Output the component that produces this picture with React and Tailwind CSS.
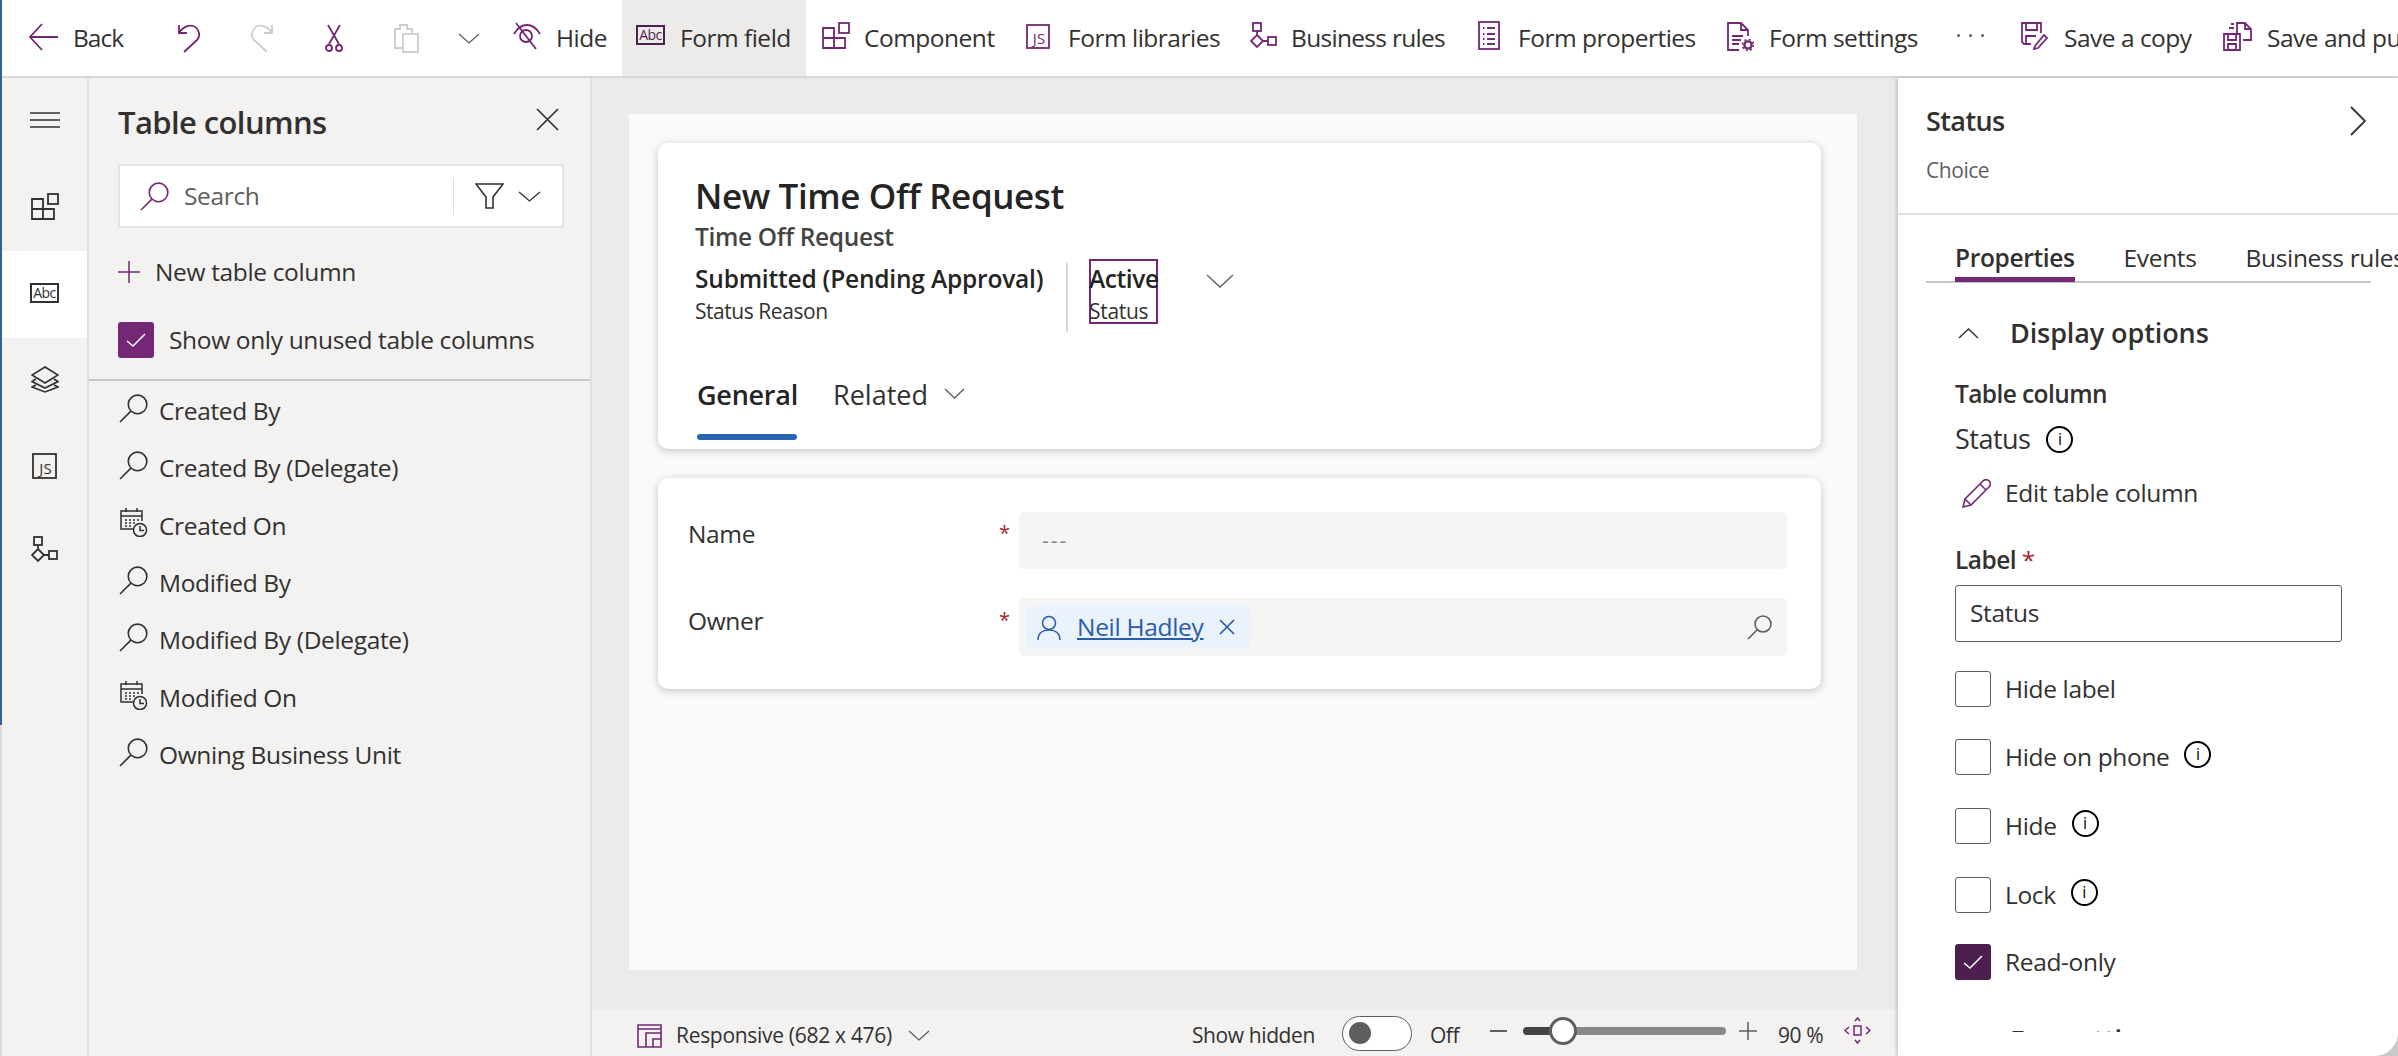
import React from "react";

const P = "#742774";
const G = "#323130";

function Svg({ w, h, children, className = "", color = P, sw = 1.8 }) {
  return (
    <svg width={w} height={h} viewBox={`0 0 ${w} ${h}`} fill="none" stroke={color} strokeWidth={sw} className={`shrink-0 ${className}`}>
      {children}
    </svg>
  );
}

function Chevron({ w = 22, h = 11, color = "#605e5c", className = "" }) {
  return (
    <Svg w={w} h={h} color={color} sw={1.3} className={className}>
      <path d={`M1 1 L${w / 2} ${h - 1} L${w - 1} 1`} />
    </Svg>
  );
}

function AbcIcon({ color }) {
  return (
    <Svg w={29} h={20} color={color} sw={2}>
      <rect x="1" y="1" width="27" height="18" />
      <text x="14.5" y="15" textAnchor="middle" fontSize="14" letterSpacing="-0.5" fill={color} stroke="none" fontFamily="'Open Sans', sans-serif">Abc</text>
    </Svg>
  );
}

function JsIcon({ color, w = 24, h = 25 }) {
  return (
    <Svg w={w} h={h} color={color}>
      <rect x="1" y="1" width={w - 2} height={h - 2} />
      <text x={w / 2 + 1} y={h - 5} textAnchor="middle" fontSize="15" fill={color} stroke="none" fontFamily="'Open Sans', sans-serif">JS</text>
    </Svg>
  );
}

function ComponentIcon({ color }) {
  return (
    <Svg w={28} h={27} color={color}>
      <path d="M1 6 H12 V26 H1 Z M12 16 H23 V26 H12 M1 16 H12" />
      <rect x="17" y="1" width="10" height="10" />
    </Svg>
  );
}

function RulesIcon({ color }) {
  return (
    <Svg w={27} h={27} color={color}>
      <rect x="3" y="1" width="8" height="8" />
      <path d="M7 9 V13 M7 13 L13 19 L7 25 L1 19 Z M13 19 H18" />
      <rect x="18" y="15" width="8" height="8" />
    </Svg>
  );
}

function SearchIcon({ w = 29, h = 29, color = G, sw = 1.6 }) {
  return (
    <Svg w={w} h={h} color={color} sw={sw}>
      <circle cx={w * 0.64} cy={h * 0.36} r={w * 0.32} />
      <path d={`M${w * 0.41} ${h * 0.59} L1 ${h - 1}`} />
    </Svg>
  );
}

function CalendarIcon() {
  return (
    <Svg w={29} h={29} color={G} sw={1.5}>
      <path d="M15 21 H2 V3 H23 V13 M2 8 H23 M7 0 V4 M18 0 V4" />
      <path d="M6 12 h2 M10 12 h2 M14 12 h2 M18 12 h2 M6 15 h2 M10 15 h2 M14 15 h2 M6 18 h2 M10 18 h2" />
      <circle cx="21" cy="22" r="6.5" />
      <path d="M21 18 V22.5 H25" />
    </Svg>
  );
}

function InfoIcon({ className = "" }) {
  return (
    <span className={`flex h-[27px] w-[27px] shrink-0 items-center justify-center rounded-full border-2 border-black text-[16px] leading-none text-black ${className}`}>i</span>
  );
}

function Check({ color = "#fff" }) {
  return (
    <Svg w={22} h={16} color={color} sw={1.5}>
      <path d="M2 9 L8 14 L20 2" />
    </Svg>
  );
}

function ToolText({ children, className = "", track = "tracking-[-0.5px]" }) {
  return <span className={`shrink-0 whitespace-nowrap text-[24.5px] ${track} text-[#323130] ${className}`}>{children}</span>;
}

function Toolbar() {
  return (
    <div className="flex h-[78px] shrink-0 items-center overflow-hidden border-b-2 border-[#d6d6d6] bg-white pl-[27px]">
      <Svg w={30} h={28} className="mt-[-2px]"><path d="M13 1 L1 14 L13 27 M1 14 H29" /></Svg>
      <ToolText track="tracking-[-1px]" className="ml-[14px] w-[59px]">Back</ToolText>
      <div className="ml-[15px] h-[49px] w-[2px] bg-[#d4d4d4]" />
      <Svg w={23} h={29} className="ml-[30px]"><path d="M2 1 V9 H10 M2 9 C5 3 12 1 16 2 C22 4 24 12 20 16 L7 28" /></Svg>
      <Svg w={23} h={29} color="#cfcdcb" className="ml-[51px]"><path d="M21 1 V9 H13 M21 9 C18 3 11 1 7 2 C1 4 -1 12 3 16 L16 28" /></Svg>
      <Svg w={18} h={28} className="ml-[51px]">
        <path d="M3 1 L14 20 M15 1 L4 20" />
        <circle cx="4" cy="24" r="3" />
        <circle cx="14" cy="24" r="3" />
      </Svg>
      <Svg w={25} h={29} color="#cfcdcb" className="ml-[51px]">
        <path d="M9 24 H1 V5 H6 V1 H13 V5 H18 V9" />
        <rect x="9" y="10" width="15" height="18" />
      </Svg>
      <div className="ml-[22px] h-[49px] w-[2px] bg-[#bdbdbd]" />
      <Chevron className="ml-[17px]" />
      <Svg w={30} h={28} className="ml-[31px] mt-[-4px]">
        <path d="M3 12 C7 5 11 3 16 3 C22 3 26 7 29 12 M5 1 L25 27" />
        <circle cx="15" cy="14" r="6" />
      </Svg>
      <ToolText className="ml-[15px] w-[51px]">Hide</ToolText>
      <div className="ml-[15px] flex h-full w-[184px] shrink-0 items-center bg-[#edebe9] pl-[14px]">
        <div className="mt-[-7px]"><AbcIcon color="#4d1f4f" /></div>
        <ToolText className="ml-[15px]">Form field</ToolText>
      </div>
      <div className="ml-[16px] mt-[-6px]"><ComponentIcon color={P} /></div>
      <ToolText className="ml-[14px] w-[131px]">Component</ToolText>
      <div className="ml-[31px] mt-[-3px]"><JsIcon color={P} /></div>
      <ToolText className="ml-[18px] w-[151px]">Form libraries</ToolText>
      <div className="ml-[31px] mt-[-6px]"><RulesIcon color={P} /></div>
      <ToolText track="tracking-[-0.7px]" className="ml-[14px] w-[154px]">Business rules</ToolText>
      <Svg w={22} h={29} className="ml-[33px] mt-[-5px]">
        <rect x="1" y="1" width="20" height="27" />
        <path d="M5 7 h1.5 M9 7 h8 M5 13 h1.5 M9 13 h8 M5 18 h1.5 M9 18 h8 M5 23 h1.5 M9 23 h8" />
      </Svg>
      <ToolText className="ml-[18px] w-[178px]">Form properties</ToolText>
      <Svg w={27} h={29} className="ml-[31px] mt-[-4px]">
        <path d="M12 28 H1 V1 H14 L21 8 V14 M14 1 V8 H21 M5 14 H16 M5 18 H14 M5 22 H12" />
        <circle cx="21" cy="23" r="3.6" strokeWidth="2.4" />
        <circle cx="21" cy="23" r="5.6" strokeWidth="1.6" strokeDasharray="2 2.4" />
      </Svg>
      <ToolText className="ml-[15px] w-[151px]">Form settings</ToolText>
      <div className="ml-[37px] mt-[-6px] flex w-[27px] shrink-0 justify-between">
        <span className="h-[3px] w-[3px] rounded-full bg-[#605e5c]" />
        <span className="h-[3px] w-[3px] rounded-full bg-[#605e5c]" />
        <span className="h-[3px] w-[3px] rounded-full bg-[#605e5c]" />
      </div>
      <Svg w={27} h={28} className="ml-[37px] mt-[-4px]">
        <path d="M10 22 H3 L1 20 V1 H20 V11 M5 1 V8 H16 V1 M5 22 V14 H15" />
        <path d="M14 24 L23 13 L26 16 L17 26 L13 27 Z" />
      </Svg>
      <ToolText className="ml-[16px] w-[130px]">Save a copy</ToolText>
      <Svg w={29} h={29} className="ml-[29px] mt-[-4px]">
        <path d="M14 11 V1 H22 L28 7 V18 H20 M22 1 V7 H28 M8 2 H11 M6 6 H11" />
        <path d="M1 12 H17 V28 H1 Z M5 12 V18 H13 V12 M5 28 V22 H13 V28" />
      </Svg>
      <ToolText className="ml-[15px]">Save and publish</ToolText>
    </div>
  );
}

function RailItem({ children, active, className = "" }) {
  return (
    <div className={`flex h-[86.5px] items-center justify-center ${active ? "bg-white" : ""}`}>
      <div className={`mt-[-3px] flex ${className}`}>{children}</div>
    </div>
  );
}

function Rail() {
  return (
    <div className="w-[87px] shrink-0 border-r-2 border-[#e1dfdd] bg-[#f3f2f1]">
      <RailItem>
        <Svg w={30} h={18} color={G} sw={1.6}><path d="M0 2 H30 M0 9 H30 M0 16 H30" /></Svg>
      </RailItem>
      <RailItem><ComponentIcon color={G} /></RailItem>
      <RailItem active><AbcIcon color={G} /></RailItem>
      <RailItem>
        <Svg w={28} h={27} color={G} sw={1.6}>
          <path d="M14 1 L27 9 L14 17 L1 9 Z M5 13 L1 15.5 L14 22 L27 15.5 L23 13 M5 19 L1 21 L14 26 L27 21 L23 19" />
        </Svg>
      </RailItem>
      <RailItem><JsIcon color={G} w={25} h={26} /></RailItem>
      <RailItem className="mb-[6px]"><RulesIcon color={G} /></RailItem>
    </div>
  );
}

const columns = [
  ["Created By", "s"],
  ["Created By (Delegate)", "s"],
  ["Created On", "c"],
  ["Modified By", "s"],
  ["Modified By (Delegate)", "s"],
  ["Modified On", "c"],
  ["Owning Business Unit", "s"],
];

function ColumnsPanel() {
  return (
    <div className="w-[503px] shrink-0 border-r-2 border-[#e1dfdd] bg-[#f3f2f1]">
      <div className="mt-[14px] flex h-[60px] items-center justify-between pl-[29px] pr-[31px]">
        <h2 className="text-[31px] font-semibold tracking-[-0.6px] text-[#323130]">Table columns</h2>
        <Svg w={23} h={23} color={G} sw={1.7} className="mt-[-5px]"><path d="M1 1 L22 22 M22 1 L1 22" /></Svg>
      </div>
      <div className="ml-[29px] mt-[12px] flex h-[64px] w-[446px] items-center border-2 border-[#e6e4e2] bg-white pl-[20px]">
        <SearchIcon color={P} />
        <span className="ml-[15px] w-[269px] text-[24.5px] tracking-[-0.35px] text-[#605e5c]">Search</span>
        <div className="h-[37px] w-[1px] bg-[#e1dfdd]" />
        <Svg w={29} h={26} color={G} sw={1.6} className="ml-[21px]"><path d="M1 1 H28 L18 14 V25 H11 V14 Z" /></Svg>
        <Chevron w={23} h={11} className="ml-[14px]" color={G} />
      </div>
      <div className="ml-[29px] mt-[24px] flex h-[40px] items-center">
        <Svg w={22} h={22} sw={1.5}><path d="M11 0 V22 M0 11 H22" /></Svg>
        <span className="ml-[15px] text-[24.5px] tracking-[-0.35px] text-[#323130]">New table column</span>
      </div>
      <div className="ml-[29px] mt-[30px] flex h-[36px] items-center">
        <span className="flex h-[36px] w-[36px] items-center justify-center rounded-[3px] bg-[#742774]"><Check /></span>
        <span className="ml-[15px] text-[24.5px] tracking-[-0.35px] text-[#323130]">Show only unused table columns</span>
      </div>
      <div className="mt-[21px] h-[2px] bg-[#c8c6c4]" />
      <div className="mt-[1.5px]">
        {columns.map(([name, kind]) => (
          <div key={name} className="flex h-[57.4px] items-center pl-[30px]">
            <div className="mt-[-6px]">{kind === "s" ? <SearchIcon /> : <CalendarIcon />}</div>
            <span className="ml-[11px] text-[24.5px] tracking-[-0.35px] text-[#323130]">{name}</span>
          </div>
        ))}
      </div>
    </div>
  );
}

function FormPage() {
  return (
    <div className="ml-[37px] mr-[41px] mt-[36px] h-[856px] bg-[#fafafa] pl-[29px] pr-[36px] pt-[29px]">
      <div className="h-[306px] rounded-[10px] bg-white pl-[37px] pt-[33px] shadow-[0_2px_8px_rgba(0,0,0,0.22)]">
        <h1 className="text-[35px] font-semibold leading-[40px] tracking-[-0.4px] text-[#242424]">New Time Off Request</h1>
        <p className="mt-[3px] text-[24.5px] font-semibold leading-[36px] tracking-[-0.35px] text-[#444]">Time Off Request</p>
        <div className="mt-[4px] flex items-start">
          <div className="w-[371px] whitespace-nowrap">
            <p className="text-[24.5px] font-semibold leading-[40px] tracking-[-0.2px] text-[#242424]">Submitted (Pending Approval)</p>
            <p className="mt-[-1px] text-[21px] leading-[26px] tracking-[-0.45px] text-[#323130]">Status Reason</p>
          </div>
          <div className="mt-[4px] h-[69px] w-[2px] bg-[#d8d8d8]" />
          <div className="ml-[21px] h-[65px] w-[69px] border-2 border-[#742774]">
            <p className="ml-[-2px] mt-[-2px] text-[24.5px] font-semibold leading-[40px] tracking-[-0.4px] text-[#242424]">Active</p>
            <p className="ml-[-2px] mt-[-1px] text-[21px] leading-[26px] tracking-[-0.3px] text-[#323130]">Status</p>
          </div>
          <Chevron w={28} h={14} className="ml-[48px] mt-[15px]" />
        </div>
        <div className="mt-[43px] flex h-[40px] items-center">
          <span className="ml-[2px] w-[100px] text-[27px] font-semibold tracking-[-0.25px] text-[#242424]">General</span>
          <span className="ml-[36px] text-[27px] tracking-[0px] text-[#323130]">Related</span>
          <Chevron w={21} h={11} className="ml-[16px] mt-[-4px]" />
        </div>
        <div className="ml-[2px] mt-[19px] h-[6px] w-[100px] rounded-[3px] bg-[#2b66b5]" />
      </div>
      <div className="mt-[29px] h-[211px] rounded-[10px] bg-white pt-[34px] shadow-[0_2px_8px_rgba(0,0,0,0.22)]">
        <div className="flex">
          <div className="flex h-[44px] w-[361px] items-center justify-between pl-[30px] pr-[9px]">
            <span className="text-[24.5px] tracking-[-0.35px] text-[#323130]">Name</span>
            <span className="mt-[-2px] text-[20px] text-[#a4262c]">*</span>
          </div>
          <div className="flex h-[57px] w-[768px] items-center rounded-[5px] bg-[#f5f5f5] pl-[23px]">
            <span className="text-[21px] tracking-[2px] text-[#8a8886]">---</span>
          </div>
        </div>
        <div className="mt-[29px] flex">
          <div className="flex h-[46px] w-[361px] items-center justify-between pl-[30px] pr-[9px]">
            <span className="text-[24.5px] tracking-[-0.35px] text-[#323130]">Owner</span>
            <span className="mt-[-2px] text-[20px] text-[#a4262c]">*</span>
          </div>
          <div className="flex h-[58px] w-[768px] items-center justify-between rounded-[5px] bg-[#f5f5f5] pl-[7px] pr-[15px]">
            <div className="flex h-[43px] w-[225px] items-center rounded-[6px] bg-[#eaf2fb] pl-[11px]">
              <Svg w={24} h={25} color="#2b5ca8" sw={1.5}>
                <circle cx="12" cy="8" r="6.5" />
                <path d="M1 25 C1 18 6 15 12 15 C18 15 23 18 23 25" />
              </Svg>
              <span className="ml-[16px] text-[24.5px] tracking-[-0.3px] text-[#2b5ca8] underline">Neil Hadley</span>
              <Svg w={16} h={16} color="#2b5ca8" sw={1.7} className="ml-[15px]"><path d="M1 1 L15 15 M15 1 L1 15" /></Svg>
            </div>
            <SearchIcon w={25} h={25} color="#605e5c" />
          </div>
        </div>
      </div>
    </div>
  );
}

function StatusBar() {
  return (
    <div className="mt-auto flex h-[46px] items-center bg-[#f3f2f1] pl-[45px] text-[21px] text-[#323130]">
      <Svg w={25} h={24} sw={1.6} className="mt-[5px]">
        <path d="M1 1 H24 V23 H1 Z M1 5 H24 M9 23 V9 H24 M16 23 V15 H24" />
      </Svg>
      <span className="ml-[14px] mt-[5px] w-[217px] whitespace-nowrap tracking-[-0.3px]">Responsive (682 x 476)</span>
      <Chevron className="ml-[15px] mt-[5px]" />
      <span className="ml-[262px] mt-[5px] w-[122px] whitespace-nowrap tracking-[-0.4px]">Show hidden</span>
      <div className="ml-[28px] flex h-[35px] w-[70px] items-center rounded-full border-[1.5px] border-[#605e5c] bg-white pl-[6px]">
        <span className="h-[22px] w-[22px] rounded-full bg-[#605e5c]" />
      </div>
      <span className="ml-[18px] mt-[5px] w-[30px] tracking-[-0.5px]">Off</span>
      <div className="ml-[30px] mt-[-4px] h-[2px] w-[17px] bg-[#605e5c]" />
      <div className="relative ml-[16px] mt-[-4px] flex h-[8px] w-[203px]">
        <div className="h-full w-[30px] rounded-l-full bg-[#444]" />
        <div className="h-full flex-1 rounded-r-full bg-[#8a8886]" />
        <span className="absolute left-[26px] top-[-10px] h-[28px] w-[28px] rounded-full border-[3px] border-[#605e5c] bg-white" />
      </div>
      <Svg w={18} h={18} color="#605e5c" sw={1.5} className="ml-[13px] mt-[-4px]"><path d="M9 0 V18 M0 9 H18" /></Svg>
      <span className="ml-[21px] mt-[5px] w-[47px] whitespace-nowrap tracking-[-0.4px]">90 %</span>
      <Svg w={27} h={27} sw={1.5} className="ml-[19px] mt-[-6px]">
        <rect x="10" y="9" width="7" height="9" />
        <path d="M11 4 L13.5 1 L16 4 M11 23 L13.5 26 L16 23 M5 10 L1 13.5 L5 17 M22 10 L26 13.5 L22 17" />
      </Svg>
    </div>
  );
}

function CheckRow({ label, checked, info, className = "" }) {
  return (
    <div className={`flex h-[36px] items-center ${className}`}>
      <span className={`flex h-[36px] w-[36px] shrink-0 items-center justify-center rounded-[3px] ${checked ? "bg-[#4d1f4f]" : "border-[1.5px] border-[#605e5c] bg-white"}`}>
        {checked && <Check />}
      </span>
      <span className="ml-[14px] text-[24.5px] tracking-[-0.35px] text-[#323130]">{label}</span>
      {info && <InfoIcon className="ml-[15px] mt-[-6px]" />}
    </div>
  );
}

function SectionHead({ label, className = "" }) {
  return (
    <div className={`flex h-[40px] items-center ${className}`}>
      <Svg w={21} h={11} color={G} sw={1.4} className="ml-[3px]"><path d="M1 10 L10.5 1 L20 10" /></Svg>
      <span className="ml-[31px] text-[27px] font-semibold tracking-[-0.1px] text-[#323130]">{label}</span>
    </div>
  );
}

function PropsPanel() {
  return (
    <div className="relative w-[500px] shrink-0 overflow-hidden bg-white shadow-[-2px_0_3px_rgba(0,0,0,0.16)]">
      <div className="mt-[13px] flex h-[60px] items-center justify-between pl-[28px] pr-[32px]">
        <h2 className="text-[27px] font-semibold tracking-[-0.6px] text-[#323130]">Status</h2>
        <Svg w={16} h={30} color={G} sw={1.8} className="mt-[-1px]"><path d="M1 1 L15 15 L1 29" /></Svg>
      </div>
      <p className="ml-[28px] mt-[4px] h-[30px] text-[21px] leading-[30px] tracking-[-0.45px] text-[#605e5c]">Choice</p>
      <div className="mt-[28px] h-[2px] bg-[#e1dfdd]" />
      <div className="ml-[28px] flex h-[68px] w-[445px] border-b-2 border-[#c8c6c4] text-[24.5px] tracking-[-0.35px] text-[#323130]">
        <div className="ml-[29px] mb-[-1px] flex w-[122px] items-center justify-center border-b-[5px] border-[#742774] pt-[24px] font-semibold">Properties</div>
        <div className="ml-[49px] flex w-[70px] items-center pt-[20px]">Events</div>
        <div className="ml-[52px] flex items-center whitespace-nowrap pt-[20px]">Business rules</div>
      </div>
      <div className="h-[749px] overflow-hidden pl-[57px]">
        <SectionHead label="Display options" className="mt-[30px]" />
        <p className="mt-[24px] h-[34px] text-[24.5px] font-semibold leading-[34px] tracking-[-0.6px] text-[#323130]">Table column</p>
        <div className="mt-[8px] flex h-[40px] items-center">
          <span className="text-[27px] tracking-[-0.5px] text-[#323130]">Status</span>
          <InfoIcon className="ml-[16px]" />
        </div>
        <div className="mt-[14px] flex h-[40px] items-center">
          <Svg w={29} h={29} sw={1.6} className="ml-[7px]">
            <path d="M1 28 L3 20 L21 2 C23 0 26 0 28 3 C29 5 28 7 27 8 L9 26 Z M3 20 L9 26 M18 5 L24 11" />
          </Svg>
          <span className="ml-[14px] text-[24.5px] tracking-[-0.35px] text-[#323130]">Edit table column</span>
        </div>
        <p className="mt-[30px] h-[34px] text-[24.5px] font-semibold leading-[34px] tracking-[-0.55px] text-[#323130]">
          Label <span className="font-normal text-[#a4262c]">*</span>
        </p>
        <div className="mt-[8px] flex h-[57px] w-[387px] items-center rounded-[3px] border-[1.5px] border-[#605e5c] pl-[14px] text-[24.5px] tracking-[-0.35px] text-[#323130]">Status</div>
        <CheckRow label="Hide label" className="mt-[29px]" />
        <CheckRow label="Hide on phone" info className="mt-[32px]" />
        <CheckRow label="Hide" info className="mt-[33px]" />
        <CheckRow label="Lock" info className="mt-[33px]" />
        <CheckRow label="Read-only" checked className="mt-[31px]" />
        <SectionHead label="Formatting" className="mt-[40px]" />
      </div>
    </div>
  );
}

export default function App() {
  return (
    <div className="h-[1056px] w-[2398px] overflow-hidden bg-[#c9c9c9]">
      <div className="flex h-full overflow-hidden rounded-br-[24px] bg-white font-['Open_Sans',sans-serif]">
        <div className="flex w-[2px] shrink-0 flex-col">
          <div className="h-[725px] bg-[#2f6297]" />
          <div className="flex-1 bg-[#dcdcdc]" />
        </div>
        <div className="flex min-w-0 flex-1 flex-col">
          <Toolbar />
          <div className="flex min-h-0 flex-1">
            <Rail />
            <ColumnsPanel />
            <div className="flex min-w-0 flex-1 flex-col bg-[#edebe9]">
              <FormPage />
              <StatusBar />
            </div>
            <PropsPanel />
          </div>
        </div>
      </div>
    </div>
  );
}
